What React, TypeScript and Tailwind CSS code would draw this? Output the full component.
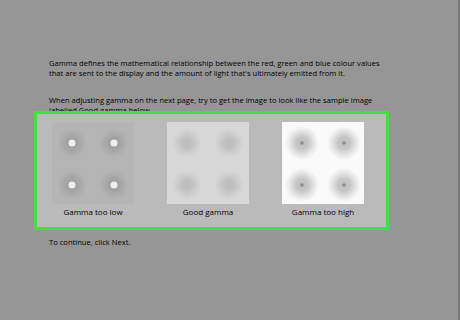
import React from 'react';

type Swatch = {
  label: string;
  bg: string;
  halo: string;
  haloR: number;
  dot: string;
  dotR: number;
};

const swatches: Swatch[] = [
  { label: 'Gamma too low', bg: '#b5b5b5', halo: '#9e9e9e', haloR: 15, dot: '#efefef', dotR: 3.5 },
  { label: 'Good gamma', bg: '#d8d8d8', halo: '#bdbdbd', haloR: 15, dot: '#bdbdbd', dotR: 0 },
  { label: 'Gamma too high', bg: '#fafafa', halo: '#bcbcbc', haloR: 17, dot: '#8e8e8e', dotR: 1.8 },
];

const spots = [
  [20, 21],
  [62, 21],
  [20, 63],
  [62, 63],
];

function GammaSample({ s, id }: { s: Swatch; id: string }) {
  return (
    <svg width="82" height="82" viewBox="0 0 82 82" className="block">
      <defs>
        <radialGradient id={id}>
          <stop offset="0%" stopColor={s.halo} stopOpacity="1" />
          <stop offset="35%" stopColor={s.halo} stopOpacity="0.85" />
          <stop offset="70%" stopColor={s.halo} stopOpacity="0.35" />
          <stop offset="100%" stopColor={s.halo} stopOpacity="0" />
        </radialGradient>
      </defs>
      <rect width="82" height="82" fill={s.bg} />
      {spots.map(([x, y], i) => (
        <g key={i}>
          <circle cx={x} cy={y} r={s.haloR} fill={`url(#${id})`} />
          {s.dotR > 0 && <circle cx={x} cy={y} r={s.dotR} fill={s.dot} />}
        </g>
      ))}
    </svg>
  );
}

export default function App() {
  return (
    <div
      className="w-[460px] h-[320px] bg-[#969696] text-black text-[7.6px] leading-[10px] font-medium border-r-2 border-[#7d7d7d] overflow-hidden"
      style={{ fontFamily: '"Open Sans", "Noto Sans", sans-serif' }}
    >
      <div className="pl-[49px] pt-[58px]">
        <p className="w-[336px]">
          Gamma defines the mathematical relationship between the red, green and blue colour values
          that are sent to the display and the amount of light that's ultimately emitted from it.
        </p>
        <p className="w-[336px] mt-[17px]">
          When adjusting gamma on the next page, try to get the image to look like the sample image
          labelled Good gamma below.
        </p>
      </div>

      {/* highlighted sample images */}
      <div className="relative ml-[34px] -mt-[4px] w-[355px] h-[119px] border-[3px] border-[#46de46] bg-[#bababa] pt-[8px] pl-[15px]">
        <div className="flex gap-[33px]">
          {swatches.map((s, i) => (
            <div key={s.label} className="flex flex-col items-center w-[82px]">
              <GammaSample s={s} id={`g${i}`} />
              <span className="mt-[3px] text-[8px] whitespace-nowrap">{s.label}</span>
            </div>
          ))}
        </div>
      </div>

      <p className="pl-[49px] mt-[7px]">To continue, click Next.</p>
    </div>
  );
}
